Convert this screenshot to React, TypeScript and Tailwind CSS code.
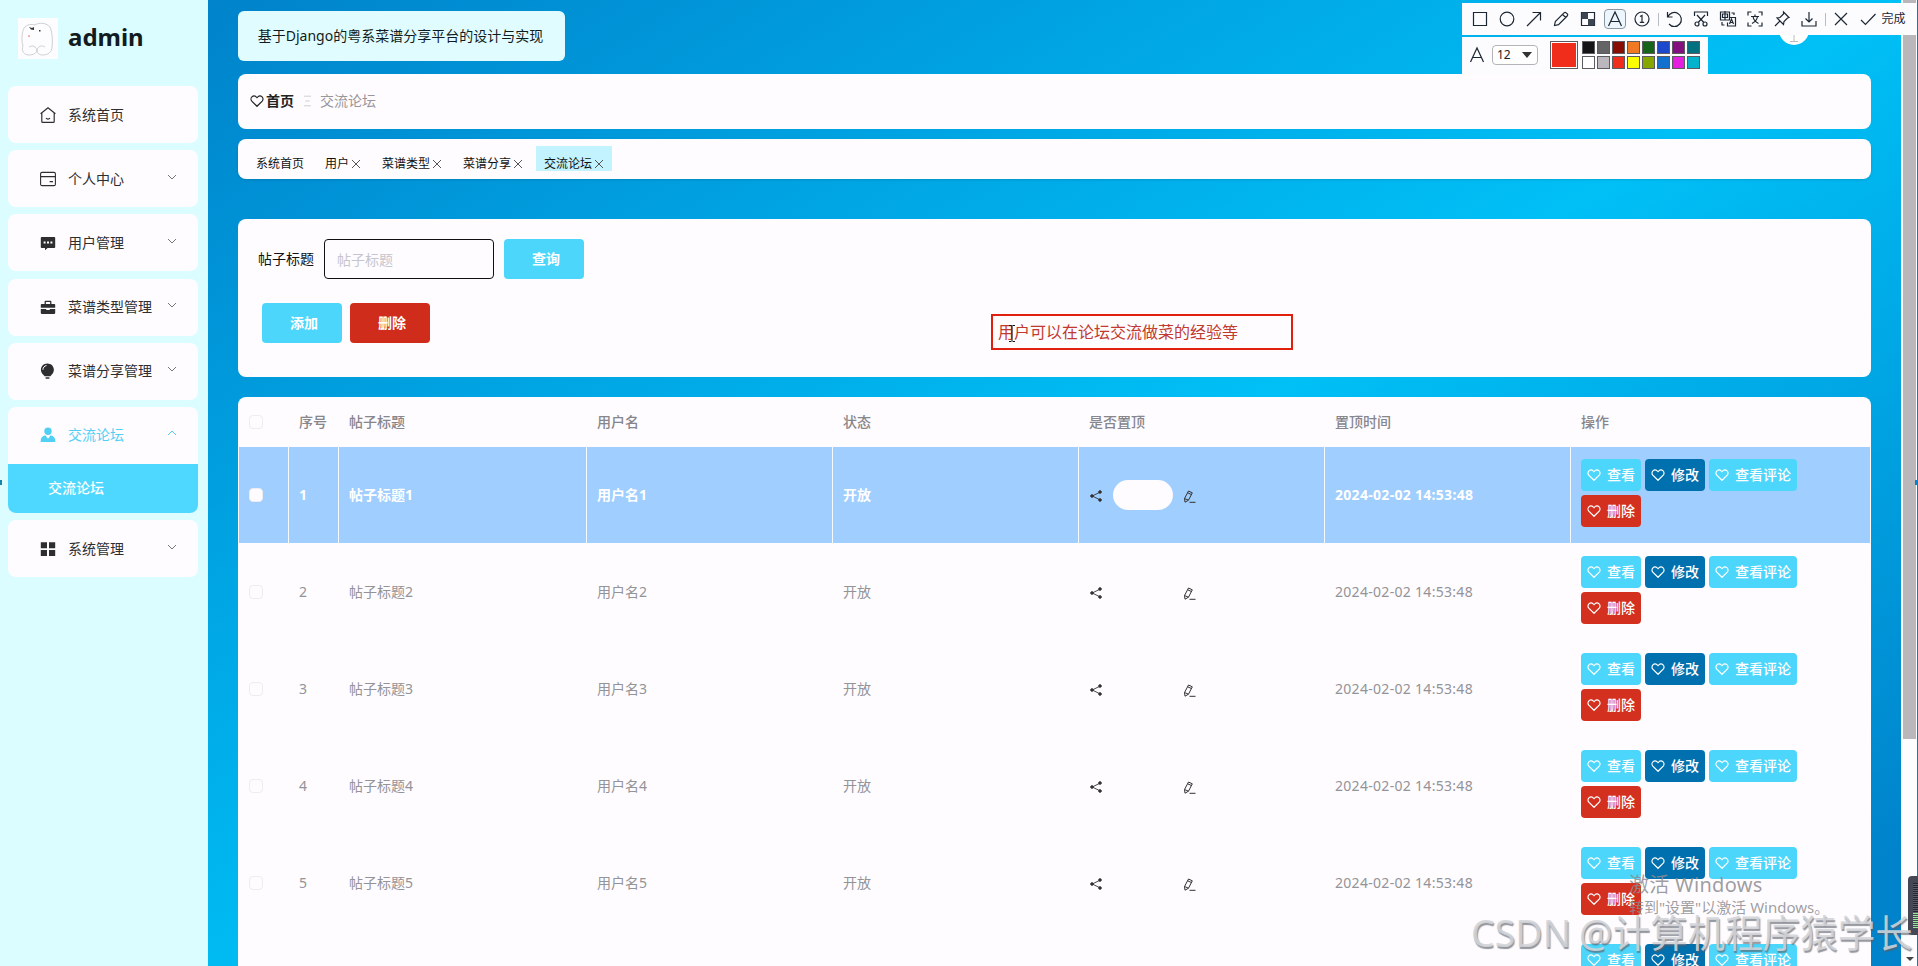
import { useState, type ReactNode } from "react";

const heartPath =
  "M7 12.300 1.800 7.200C.7 6 .7 4 1.900 2.900 3.200 1.700 5 1.800 6.200 2.900L7 3.600l.8-.7c1.200-1.100 3-1.200 4.300 0C13.300 4 13.300 6 12.200 7.200Z";

function Heart({ className = "" }: { className?: string }) {
  return (
    <svg
      viewBox="0 0 14 14"
      className={`h-3.5 w-3.5 shrink-0 ${className}`}
      fill="none"
      stroke="currentColor"
      strokeWidth="1.2"
    >
      <path d={heartPath} />
    </svg>
  );
}

function Chevron({ up = false }: { up?: boolean }) {
  return (
    <svg
      viewBox="0 0 10 6"
      className="h-1.5 w-2.5"
      fill="none"
      stroke="currentColor"
      strokeWidth="1"
    >
      <path d={up ? "M1 5l4-4 4 4" : "M1 1l4 4 4-4"} />
    </svg>
  );
}

const menuIcons: Record<string, ReactNode> = {
  home: (
    <g fill="none" stroke="currentColor" strokeWidth="1.2">
      <path d="M.6 6.8 8 .8l7.4 6M1.8 6v8.4c0 .6.4 1 1 1h10.4c.6 0 1-.4 1-1V6" />
      <path d="M6 11.2c1 1.2 3 1.2 4 0" />
    </g>
  ),
  card: (
    <g fill="none" stroke="currentColor" strokeWidth="1.1">
      <rect x=".6" y="1.4" width="14.8" height="13.2" rx="1.4" />
      <path d="M.6 5.6h14.8M9.6 10.6H13" />
    </g>
  ),
  comment: (
    <g>
      <path
        fill="currentColor"
        d="M1.6 2h12.8c.5 0 .8.3.8.8v9.4c0 .5-.3.8-.8.8H7.6L5 15.2V13H1.6c-.5 0-.8-.3-.8-.8V2.8c0-.5.3-.8.8-.8Z"
      />
      <path fill="#fff" d="M3.6 6.4h2v2h-2zM7 6.4h2v2H7zM10.4 6.4h2v2h-2z" />
    </g>
  ),
  briefcase: (
    <g fill="currentColor">
      <path d="M4.6 5V2.600c0-.5.4-.9.9-.9h5c.5 0 .9.4.9.9V5h3c.5 0 .8.3.8.8v3H.8v-3c0-.5.3-.8.8-.8Zm1.300 0h4.200V3H5.900Z" />
      <path d="M.8 10.100h5.400v.9h3.600v-.9h5.400v4c0 .5-.3.8-.8.8H1.600c-.5 0-.8-.3-.8-.8Z" />
    </g>
  ),
  bulb: (
    <g>
      <path
        fill="currentColor"
        d="M7.400.4c3.800 0 6.500 2.800 6.500 6.400 0 2.900-1.900 4.700-3.500 6.400H4.600C2.900 11.500.9 9.700.9 6.800.9 3.200 3.600.4 7.400.4Z"
      />
      <path fill="currentColor" d="M5.600 14.200h3.800v1.500H5.600z" />
      <path
        fill="none"
        stroke="#fff"
        strokeWidth="1"
        d="M2.900 6.800c.1-2.300 1.500-3.900 3.600-4.300"
      />
    </g>
  ),
  user: (
    <g fill="currentColor">
      <circle cx="8" cy="4.300" r="3.700" />
      <path d="M5.300 8.300 8 11.800l2.700-3.500c3 .5 4.600 2.700 4.600 5.700v1H.7v-1c0-3 1.600-5.200 4.600-5.700Z" />
    </g>
  ),
  grid: (
    <path
      fill="currentColor"
      d="M.8 1.200h6.200v6H.8zM9 1.200h6.200v6H9zM.8 9H7v6H.8zM9 9h6.200v6H9z"
    />
  ),
};

const menu = [
  { icon: "home", label: "系统首页" },
  { icon: "card", label: "个人中心", arrow: true },
  { icon: "comment", label: "用户管理", arrow: true },
  { icon: "briefcase", label: "菜谱类型管理", arrow: true },
  { icon: "bulb", label: "菜谱分享管理", arrow: true },
  { icon: "user", label: "交流论坛", arrow: true, child: "交流论坛" },
  { icon: "grid", label: "系统管理", arrow: true },
];

function Sidebar() {
  return (
    <aside className="relative w-[208px] shrink-0 bg-[#dcfdff] pl-2 pr-[10px]">
      <div className="flex h-[86px] items-start pl-[10px] pt-[18px]">
        <svg viewBox="0 0 40 41" className="h-[41px] w-10 bg-[#fdfcff]">
          <g fill="none" stroke="#c9c9cc" strokeWidth=".9">
            <path d="M5 28C3 22 4 14 6 10c3-4 8-4 11-3 4-3 12-2 15 2 2 4 3 14 2 20 0 5-4 8-9 8-4 0-6-2-6-5 1-4 5-5 8-3" />
            <path d="M5 28c-2 5 1 9 6 9 4 0 8-2 8-5-1-4-5-5-8-3" />
          </g>
          <path fill="#333" d="m11 9 3 1 2-1v3l-3-.5zM21 12h1.500v1.500H21z" />
          <path fill="#e88" d="M10 17.500h2v1.200h-2z" />
        </svg>
        <span className="ml-2.5 mt-[2px] text-2xl leading-[34px] font-bold text-[#111b20]">
          admin
        </span>
      </div>
      <nav className="flex flex-col gap-[7.200px]">
        {menu.map((item) => (
          <div
            key={item.label}
            className="overflow-hidden rounded-lg bg-[#fefcff]"
          >
            <div
              className={`flex h-[57px] items-center pl-8 pr-[21px] text-sm ${
                item.child ? "text-[#52d0f4]" : "text-[#2e2e30]"
              }`}
            >
              <svg viewBox="0 0 16 16" className="h-4 w-4 shrink-0">
                {menuIcons[item.icon]}
              </svg>
              <span className="ml-3 flex-1 whitespace-nowrap">
                {item.label}
              </span>
              {item.arrow && (
                <span className={`-mt-1 ${item.child ? "" : "text-[#777]"}`}>
                  <Chevron up={!!item.child} />
                </span>
              )}
            </div>
            {item.child && (
              <div className="flex h-[49px] items-center bg-[#4fd8ff] pl-10 text-sm font-medium text-white">
                {item.child}
              </div>
            )}
          </div>
        ))}
      </nav>
      <span className="absolute left-0 top-[480px] h-[5px] w-[2px] bg-[#1684ad]" />
    </aside>
  );
}

const tabs = ["系统首页", "用户", "菜谱类型", "菜谱分享", "交流论坛"];

function Tabs() {
  const [active, setActive] = useState("交流论坛");
  return (
    <div className="mt-[10px] flex h-10 shrink-0 items-start gap-[5px] rounded-lg bg-[#fefcff] pl-[10px] pt-[7px] shadow-sm">
      {tabs.map((tab, idx) => (
        <button
          key={tab}
          type="button"
          onClick={() => setActive(tab)}
          className={`flex h-[25px] items-center whitespace-nowrap px-2 pt-[10px] text-xs text-[#111] ${
            tab === active ? "bg-[#c2f3ff]" : ""
          }`}
        >
          {tab}
          {idx > 0 && (
            <svg
              viewBox="0 0 10 10"
              className="ml-[2px] h-[10px] w-[10px]"
              stroke="#555"
              strokeWidth="1"
            >
              <path d="m1 1 8 8M9 1 1 9" />
            </svg>
          )}
        </button>
      ))}
    </div>
  );
}

const bigButton =
  "flex h-10 w-20 items-center justify-center rounded pl-1 text-sm font-bold text-white";

function SearchPanel() {
  return (
    <section className="relative mt-10 h-[158px] shrink-0 rounded-lg bg-[#fefcff] pl-5 pt-5">
      <div className="flex items-center">
        <label className="text-sm text-[#111]">帖子标题</label>
        <input
          placeholder="帖子标题"
          className="ml-[10px] h-10 w-[170px] rounded border border-[#111] px-3 text-sm placeholder:text-[#c6c5cf]"
        />
        <button type="button" className={`ml-[10px] bg-[#4dd6fc] ${bigButton}`}>
          查询
        </button>
      </div>
      <div className="mt-6 flex gap-2 pl-1">
        <button type="button" className={`bg-[#4dd6fc] ${bigButton}`}>
          添加
        </button>
        <button type="button" className={`bg-[#d02c1b] ${bigButton}`}>
          删除
        </button>
      </div>
      <div className="absolute left-[753px] top-[95px] flex h-9 w-[302px] items-center border-2 border-[#e0200c] pl-[5px] text-base text-[#c1392f]">
        用户可以在论坛交流做菜的经验等
        <svg
          viewBox="0 0 8 17"
          className="absolute left-[15px] top-[9px] h-[17px] w-2"
          fill="none"
          stroke="#111"
        >
          <path d="M1 .5h2.200L4 1.300 4.800.5H7M4 1.300v14.400M1 16.500h2.200l.8-.8.8.8H7" />
        </svg>
      </div>
    </section>
  );
}

const columns =
  "grid grid-cols-[50px_50px_248px_246px_246px_246px_246px_299px]";
const headers = ["序号", "帖子标题", "用户名", "状态", "是否置顶", "置顶时间", "操作"];

const smallButton =
  "flex h-8 items-center gap-1.5 rounded px-1.5 text-sm font-medium text-white whitespace-nowrap";

function Actions() {
  return (
    <div className="flex flex-wrap content-start gap-1 pl-[10px] pr-10 pt-3">
      <button type="button" className={`bg-[#4dd6fc] ${smallButton}`}>
        <Heart />
        查看
      </button>
      <button type="button" className={`bg-[#0070ae] ${smallButton}`}>
        <Heart />
        修改
      </button>
      <button type="button" className={`bg-[#4dd6fc] ${smallButton}`}>
        <Heart />
        查看评论
      </button>
      <button type="button" className={`bg-[#d43020] ${smallButton}`}>
        <Heart />
        删除
      </button>
    </div>
  );
}

function Row({ n }: { n: number }) {
  const hot = n === 1;
  const cell = `flex items-center pl-[10px] whitespace-nowrap ${
    hot ? "border-r border-white/90" : "border-r border-transparent"
  }`;
  return (
    <div
      className={`mb-px h-24 ${columns} text-sm ${
        hot ? "bg-[#9fceff] font-bold text-white" : "text-[#939398]"
      }`}
    >
      <div className={cell}>
        <span className="h-3.5 w-3.5 rounded-sm border border-[#eeecf1] bg-[#fefcff]" />
      </div>
      <div className={cell}>{n}</div>
      <div className={cell}>帖子标题{n}</div>
      <div className={cell}>用户名{n}</div>
      <div className={cell}>开放</div>
      <div className={`${cell} text-[#333]`}>
        <svg
          viewBox="0 0 12 12"
          className="ml-px mt-0.5 h-3 w-3"
          fill="currentColor"
          stroke="currentColor"
        >
          <path d="M10 2.200 2.200 6l7.800 3.800" fill="none" strokeWidth=".9" />
          <circle cx="2" cy="6" r="1.300" />
          <circle cx="10" cy="2" r="1.300" />
          <circle cx="10" cy="10" r="1.300" />
        </svg>
        <span className="ml-[11px] h-[30px] w-[60px] rounded-full bg-[#fefcff]" />
        <svg
          viewBox="0 0 13 13"
          className="ml-[10px] mt-0.5 h-[13px] w-[13px]"
          fill="none"
          stroke="currentColor"
          strokeWidth="1"
        >
          <path d="m1.500 8.500 4-7.500 3.800 1.800-3.800 7.400L2 12.200ZM1.500 8.500l4 1.700M4.700 2.800l3.700 1.700M6.500 12.300h6" />
        </svg>
      </div>
      <div className={cell}>
        <span className="tracking-[0.3px]">2024-02-02 14:53:48</span>
      </div>
      <Actions />
    </div>
  );
}

function ForumTable() {
  return (
    <section className="mt-5 h-[1000px] shrink-0 rounded-t-lg bg-[#fefcff] px-px">
      <div
        className={`h-[50px] ${columns} items-center text-sm font-medium text-[#87868b]`}
      >
        <span className="ml-[10px] h-3.5 w-3.5 rounded-sm border border-[#eeecf1]" />
        {headers.map((h) => (
          <span key={h} className="pl-[10px]">
            {h}
          </span>
        ))}
      </div>
      {[1, 2, 3, 4, 5, 6].map((n) => (
        <Row key={n} n={n} />
      ))}
    </section>
  );
}

// 18px artwork, one entry per toolbar button
const tools: Record<string, ReactNode> = {
  rect: <path d="M2.500 2.500h13v13h-13z" />,
  circle: <circle cx="9" cy="9" r="6.800" />,
  arrow: <path d="M2 16 15.500 2.500M7.500 2.500h8v8" />,
  pencil: (
    <path d="m2.500 15.500.8-4L12 2.800c.7-.7 1.600-.7 2.200 0l1 1c.7.600.7 1.500 0 2.200L6.500 14.700ZM10.500 4.300l3.200 3.200" />
  ),
  mosaic: (
    <g>
      <path d="M2.500 2.500h13v13h-13z" />
      <path fill="#3b4652" stroke="none" d="M2.500 2.500H9V9H2.500zM9 9h6.500v6.500H9z" />
    </g>
  ),
  text: <path d="M2.500 16 9 2l6.500 14M5 11.500h8" />,
  number: (
    <g>
      <circle cx="9" cy="9" r="7" />
      <path d="m7 6.500 2-1V12M6.800 12.300h4.400" />
    </g>
  ),
  undo: <path d="M2.500 2v5h5M2.800 7A7 7 0 1 1 4 14" />,
  cut: (
    <g>
      <path d="M2.500 6V2h13v4M5 5l6.800 7.500M13 5l-6.800 7.500" />
      <circle cx="5" cy="14" r="2" />
      <circle cx="13" cy="14" r="2" />
    </g>
  ),
  translate: (
    <g>
      <path d="M1.500 2h9v8h-9zM6 1v9M3.500 4h5v3.500h-5zM11 7.500h5.500v8.500H8.500v-3.500M12.500 3h2.500v2M3 12v3h2.500" />
      <path d="m10.500 14 2-5 2 5M11.200 12.500h2.600" />
    </g>
  ),
  ocr: (
    <path d="M2 5.500V2h3.500M12.500 2H16v3.500M16 12.500V16h-3.500M5.500 16H2v-3.500M5 6.500h8M9 4.500v2M6 13.500c3-1.500 5-4 5.500-7M12.500 13.500c-3-1.500-5-4-5.500-7" />
  ),
  pin: (
    <path d="m10.500 2 5.500 5.500-1.500.5-3.500 3.500-.5 3L4 8l3-.5L10.500 4ZM7 11l-5 5M5 9l5 5" />
  ),
  save: <path d="M2 11v5h14v-5M9 2v10M5.500 8.500 9 12l3.500-3.500" />,
  close: <path d="m3 3 12 12M15 3 3 15" />,
  done: <path d="m2 10 4.500 4.500L16.500 4" />,
};

function Tool({ name }: { name: string }) {
  return (
    <button
      type="button"
      className="flex h-full w-[27px] shrink-0 items-center justify-center"
    >
      <span
        className={`flex h-5 w-[22px] items-center justify-center ${
          name === "text" ? "rounded-sm border border-[#8b97a3] bg-[#edf6fc]" : ""
        }`}
      >
        <svg
          viewBox="0 0 18 18"
          className="h-[18px] w-[18px] shrink-0"
          fill="none"
          stroke="#1c2733"
          strokeWidth="1.200"
        >
          {tools[name]}
        </svg>
      </span>
    </button>
  );
}

function Divider() {
  return (
    <span className="flex w-[5px] shrink-0 justify-center">
      <span className="h-[13px] w-px bg-[#b9bcc2]" />
    </span>
  );
}

const swatches = [
  "bg-[#151517]",
  "bg-[#646466]",
  "bg-[#8a0d02]",
  "bg-[#f07a24]",
  "bg-[#17651a]",
  "bg-[#1c48cb]",
  "bg-[#84107f]",
  "bg-[#037180]",
  "bg-white",
  "bg-[#bbb7bd]",
  "bg-[#f02d1b]",
  "bg-[#fdff00]",
  "bg-[#86a600]",
  "bg-[#1271cf]",
  "bg-[#e41fdf]",
  "bg-[#04b2cb]",
];

function CaptureToolbar() {
  return (
    <div className="absolute left-[1462px] top-[3px] w-[454px]">
      <div className="relative flex h-8 items-center bg-[#fcfcff] pl-[4.500px] text-xs text-[#1c2733]">
        {["rect", "circle", "arrow", "pencil", "mosaic", "text", "number"].map(
          (t) => (
            <Tool key={t} name={t} />
          ),
        )}
        <Divider />
        {["undo", "cut", "translate", "ocr", "pin", "save"].map((t) => (
          <Tool key={t} name={t} />
        ))}
        <Divider />
        <Tool name="close" />
        <Tool name="done" />
        <span className="whitespace-nowrap">完成</span>
      </div>
      <div className="mt-[2px] flex h-[37px] w-[246px] items-center bg-[#fcfcff] pb-[2px] pl-[6px]">
        <svg
          viewBox="0 0 18 18"
          className="h-[18px] w-[18px]"
          fill="none"
          stroke="#1c2733"
          strokeWidth="1.200"
        >
          {tools.text}
        </svg>
        <div className="ml-[6px] flex h-5 w-[46px] items-center justify-between rounded-sm border border-[#b5b3ba] bg-white pl-1 pr-[5px] text-xs text-[#222]">
          12
          <svg viewBox="0 0 10 6" className="h-1.5 w-[10px]">
            <path d="M0 0h10L5 6z" fill="#333" />
          </svg>
        </div>
        <div className="ml-3 h-7 w-7 border border-[#5c5b60] bg-white p-px">
          <div className="h-full w-full bg-[#f02d1b]" />
        </div>
        <div className="ml-1 grid grid-cols-8 gap-[2px]">
          {swatches.map((c) => (
            <span key={c} className={`h-[13px] w-[13px] border border-[#5c5b60] ${c}`} />
          ))}
        </div>
      </div>
    </div>
  );
}

function Scrollbar() {
  return (
    <div className="relative flex w-[17px] shrink-0 justify-end border-r border-[#0b7fae] bg-[#fdfdff]">
      <div className="mr-px h-[739px] w-[13px] bg-[#bab7bb]" />
      <span className="absolute -right-px top-[480px] h-[5px] w-[3px] bg-[#0b7fd0]" />
      <div className="absolute -right-px top-[876px] flex h-[59px] w-[10px] flex-col items-end rounded-l bg-[#454755] py-[7px]">
        <div className="h-[30px] w-[5px] bg-[repeating-linear-gradient(#24252f_0_1px,#5b5d6c_1px_2px)]" />
        <div className="h-[15px] w-[5px] bg-[repeating-linear-gradient(#9be89b_0_1px,#454755_1px_2px)]" />
      </div>
      <svg
        viewBox="0 0 8 4"
        className="absolute bottom-[5px] right-[3px] h-1 w-2"
      >
        <path d="M0 0h8L4 4z" fill="#444" />
      </svg>
    </div>
  );
}

export default function App() {
  return (
    <div className="relative flex h-screen w-full overflow-hidden font-['Noto_Sans','Noto_Sans_CJK_SC',sans-serif]">
      <Sidebar />
      <main className="flex min-w-0 flex-1 flex-col overflow-hidden bg-[linear-gradient(to_bottom_right,#0083cb,#00c0f6_50%,#0083cb_90%)] bg-[length:100%_1060px] px-[30px] pt-[11px]">
        <div className="flex h-[50px] w-[327px] shrink-0 items-center justify-center whitespace-nowrap rounded-md bg-[#e0fcff] pr-0.5 text-sm text-[#111c22]">
          基于Django的粤系菜谱分享平台的设计与实现
        </div>
        <div className="mt-[13px] flex h-[55px] shrink-0 items-center rounded-lg bg-[#fefcff] pb-0.5 pl-3 text-sm">
          <Heart className="text-[#222]" />
          <span className="ml-0.5 font-bold text-[#222]">首页</span>
          <svg
            viewBox="0 0 8 12"
            className="ml-2.5 h-3 w-[7px]"
            stroke="#c9c7ce"
            strokeWidth="1"
          >
            <path d="M0 .5h8M1.500 6h5M0 11.500h8" />
          </svg>
          <span className="ml-[9px] text-[#97969b]">交流论坛</span>
        </div>
        <Tabs />
        <SearchPanel />
        <ForumTable />
      </main>
      <Scrollbar />

      <div className="absolute left-[1779px] top-[15px] flex h-[30px] w-[30px] items-end justify-center rounded-full bg-white pb-[3px]">
        <svg viewBox="0 0 10 8" className="h-2 w-[10px]" stroke="#bbb">
          <path d="M5 0v7M1 7.500h8" />
        </svg>
      </div>
      <CaptureToolbar />

      <div className="pointer-events-none absolute left-[1629px] top-[870px] whitespace-nowrap text-[#8d8c90]/85">
        <p className="text-[20px] leading-[30px] tracking-[0.3px]">
          激活 Windows
        </p>
        <p className="-mt-0.5 text-[15px] leading-[18px]">
          转到"设置"以激活 Windows。
        </p>
      </div>
      <div className="pointer-events-none absolute left-[1471px] top-[907px] flex whitespace-nowrap text-[37.500px] leading-[52px] text-[#d3d4d8]/90 [text-shadow:1px_2px_1px_rgba(90,95,105,0.65)]">
        <span className="w-[108px]">CSDN</span>
        <span>@计算机程序猿学长</span>
      </div>
    </div>
  );
}
